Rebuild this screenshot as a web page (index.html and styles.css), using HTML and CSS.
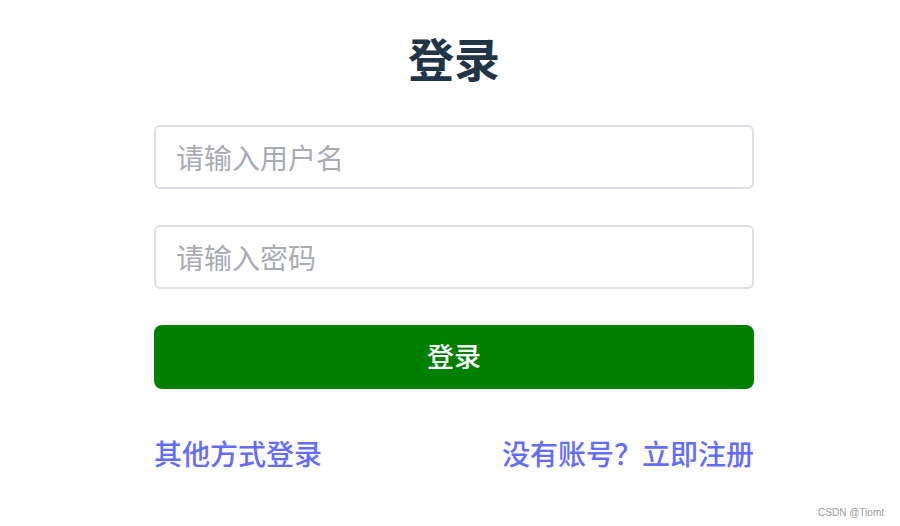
FILE: index.html
```html
<!DOCTYPE html>
<html lang="zh-CN">
<head>
<meta charset="utf-8">
<title>登录</title>
<link rel="stylesheet" href="styles.css">
</head>
<body>
<main class="login">
  <h1 class="login-title">登录</h1>
  <form class="login-form">
    <input class="field" type="text" placeholder="请输入用户名">
    <input class="field" type="password" placeholder="请输入密码">
    <button class="submit" type="button">登录</button>
  </form>
  <div class="links">
    <a class="link" href="#">其他方式登录</a>
    <a class="link" href="#">没有账号？立即注册</a>
  </div>
</main>
<div class="watermark">CSDN @Tiomt</div>
</body>
</html>
```
FILE: styles.css
```css
html, body {
  margin: 0;
  padding: 0;
  background: #ffffff;
}
body {
  font-family: "Noto Sans CJK SC", "Noto Sans", sans-serif;
  width: 900px;
  height: 526px;
  position: relative;
  overflow: hidden;
}
.login {
  width: 600px;
  margin-left: 154px;
  padding-top: 24px;
  display: flex;
  flex-direction: column;
}
.login-title {
  margin: 0;
  text-align: center;
  font-size: 46px;
  line-height: 66px;
  font-weight: 700;
  color: #213547;
}
.login-form {
  margin-top: 35px;
  display: flex;
  flex-direction: column;
  gap: 36px;
}
.field {
  box-sizing: border-box;
  height: 64px;
  width: 100%;
  border: 2px solid #dcdfe6;
  border-radius: 6px;
  padding: 0 20px;
  font-family: inherit;
  font-size: 28px;
  color: #303133;
  outline: none;
}
.field::placeholder {
  color: #a8abb2;
}
.submit {
  box-sizing: border-box;
  height: 64px;
  width: 100%;
  border: none;
  border-radius: 8px;
  padding: 0 0 4px;
  background: #008000;
  color: #ffffff;
  font-family: inherit;
  font-size: 27px;
  font-weight: 500;
  cursor: pointer;
}
.links {
  margin-top: 44px;
  display: flex;
  justify-content: space-between;
}
.link {
  font-size: 28px;
  line-height: 40px;
  font-weight: 500;
  color: #646cff;
  text-decoration: none;
}
.watermark {
  position: absolute;
  right: 16px;
  bottom: 8px;
  font-family: "Liberation Sans", Arial, sans-serif;
  font-size: 10px;
  color: #9a9a9a;
}
```
